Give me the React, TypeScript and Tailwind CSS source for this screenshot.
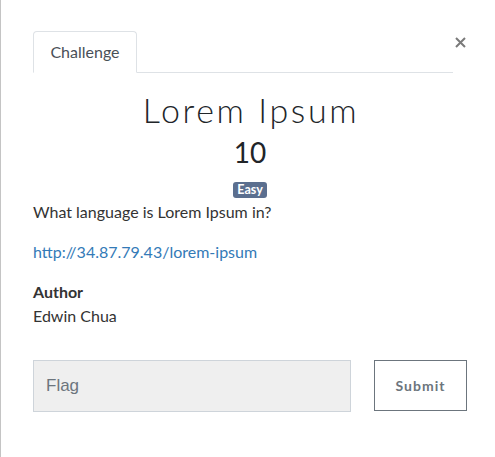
export default function App() {
  return (
    <div className="h-[457px] w-[495px] overflow-hidden border-l border-[#c4c4c4] bg-white font-['Lato','Liberation_Sans',sans-serif] text-[#333]">
      <div className="pl-[32px] pt-[31px]">
        <div className="flex items-start">
          <div className="flex w-[420px] border-b border-[#dee2e6]">
            <div className="-mb-px flex h-[42px] w-[104px] items-center justify-center rounded-t-[4px] border border-b-white border-[#dee2e6] bg-white text-[16px] text-[#495057]">
              Challenge
            </div>
          </div>
          <button className="ml-[1px] mt-[6px] flex h-[11px] w-[12px] items-center justify-center">
            <svg width="11" height="11" viewBox="0 0 11 11">
              <path d="M1 1L10 10M10 1L1 10" stroke="#7a7a7a" strokeWidth="2" />
            </svg>
          </button>
        </div>
      </div>

      <div className="w-[466px] pl-[32px]">
        <div className="flex flex-col items-center">
          <h3 className="mt-[17px] pl-[2px] text-[34px] leading-[40px] font-light tracking-[2.6px] text-[#212529]">Lorem Ipsum</h3>
          <h4 className="mt-[5px] text-[28px] leading-[34px] font-normal text-[#212529]">10</h4>
          <span className="mt-[13px] rounded-[3px] bg-[#5b6f8f] px-[4px] text-[12.5px] leading-[16px] font-bold text-white">Easy</span>
        </div>

        <p className="mt-[2px] text-[16px] leading-[24px]">What language is Lorem Ipsum in?</p>
        <p className="mt-[16px] text-[16px] leading-[24px]">
          <a className="text-[#337ab7]" href="#">http://34.87.79.43/lorem-ipsum</a>
        </p>
        <p className="mt-[16px] text-[16px] leading-[24px] font-bold">Author</p>
        <p className="text-[16px] leading-[24px]">Edwin Chua</p>

        <div className="mt-[32px] flex items-start gap-[23px]">
          <input
            className="h-[52px] w-[318px] border border-[#ced4da] bg-[#efefef] px-[12px] font-['Liberation_Sans',Arial,sans-serif] text-[17px] text-[#495057] placeholder:text-[#6c757d] outline-none"
            placeholder="Flag"
          />
          <button className="h-[51px] w-[93px] border border-[#6c757d] bg-white text-[14px] font-bold tracking-[1px] text-[#6c757d]">
            Submit
          </button>
        </div>
      </div>
    </div>
  );
}
